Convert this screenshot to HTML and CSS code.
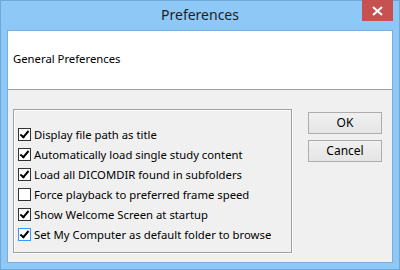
FILE: index.html
```html
<!DOCTYPE html>
<html>
<head>
<meta charset="utf-8">
<link rel="stylesheet" href="styles.css">
</head>
<body>
<div class="window">
  <div class="titlebar">
    <span class="title">Preferences</span>
    <div class="close">
      <svg width="11" height="10" viewBox="0 0 11 10"><path d="M1 1 L10 9 M10 1 L1 9" stroke="#fff" stroke-width="2"/></svg>
    </div>
  </div>
  <div class="client">
    <div class="header">General Preferences</div>
    <div class="body">
      <div class="group">
        <label class="row"><span class="cb checked"></span>Display file path as title</label>
        <label class="row"><span class="cb checked"></span>Automatically load single study content</label>
        <label class="row"><span class="cb checked"></span>Load all DICOMDIR found in subfolders</label>
        <label class="row"><span class="cb"></span>Force playback to preferred frame speed</label>
        <label class="row"><span class="cb checked"></span>Show Welcome Screen at startup</label>
        <label class="row"><span class="cb checked focus"></span>Set My Computer as default folder to browse</label>
      </div>
      <div class="buttons">
        <button class="btn">OK</button>
        <button class="btn">Cancel</button>
      </div>
    </div>
  </div>
</div>
</body>
</html>
```
FILE: styles.css
```css
html, body {
  margin: 0;
  padding: 0;
}
body {
  font-family: "Noto Sans", "Open Sans", sans-serif;
  font-size: 11.3px;
  color: #000;
}
.window {
  width: 400px;
  height: 270px;
  box-sizing: border-box;
  border: 1px solid #6fa7d8;
  background: #8ec8f6;
  display: flex;
  flex-direction: column;
}
.titlebar {
  height: 29px;
  flex: none;
  position: relative;
  display: flex;
  justify-content: center;
}
.title {
  font-size: 14px;
  line-height: 29px;
  color: #1e1e1e;
  margin-top: -1px;
}
.close {
  position: absolute;
  right: 6px;
  top: -1px;
  width: 31px;
  height: 21px;
  background: #c75050;
  display: flex;
  align-items: center;
  justify-content: center;
}
.client {
  margin: 0 6px;
  height: 233px;
  box-sizing: border-box;
  border: 1px solid #78aede;
  background: #f0f0f0;
  display: flex;
  flex-direction: column;
}
.header {
  flex: none;
  background: #fff;
  border-bottom: 1px solid #a0a0a0;
  padding-left: 5px;
  box-sizing: border-box;
  height: 59px;
  line-height: 56px;
}
.body {
  flex: 1;
  display: flex;
  padding: 19px 0 9px 5px;
}
.group {
  width: 279px;
  box-sizing: border-box;
  border: 1px solid #a0a0a0;
  box-shadow: 1px 1px 0 #fff, inset 1px 1px 0 #fff;
  padding: 18px 0 0 4px;
  display: flex;
  flex-direction: column;
}
.row {
  height: 20px;
  display: flex;
  align-items: flex-start;
  line-height: 14px;
  white-space: nowrap;
}
.cb {
  width: 13px;
  height: 13px;
  box-sizing: border-box;
  border: 1px solid #333;
  background: #fff;
  margin-right: 3px;
  flex: none;
  position: relative;
}
.cb.focus {
  border-color: #3399ff;
}
.cb.checked::after {
  content: "";
  position: absolute;
  left: 3px;
  top: 0px;
  width: 3px;
  height: 7px;
  border: solid #000;
  border-width: 0 2px 2px 0;
  transform: rotate(40deg);
}
.buttons {
  display: flex;
  flex-direction: column;
  gap: 6px;
  margin-left: 16px;
  padding-top: 3px;
}
.btn {
  width: 74px;
  height: 22px;
  box-sizing: border-box;
  border: 1px solid #adadad;
  background: linear-gradient(#f0f0f0, #e5e5e5);
  font-family: "Noto Sans", "Open Sans", sans-serif;
  font-size: 12px;
  color: #000;
  padding: 0;
  line-height: 18px;
}
```
